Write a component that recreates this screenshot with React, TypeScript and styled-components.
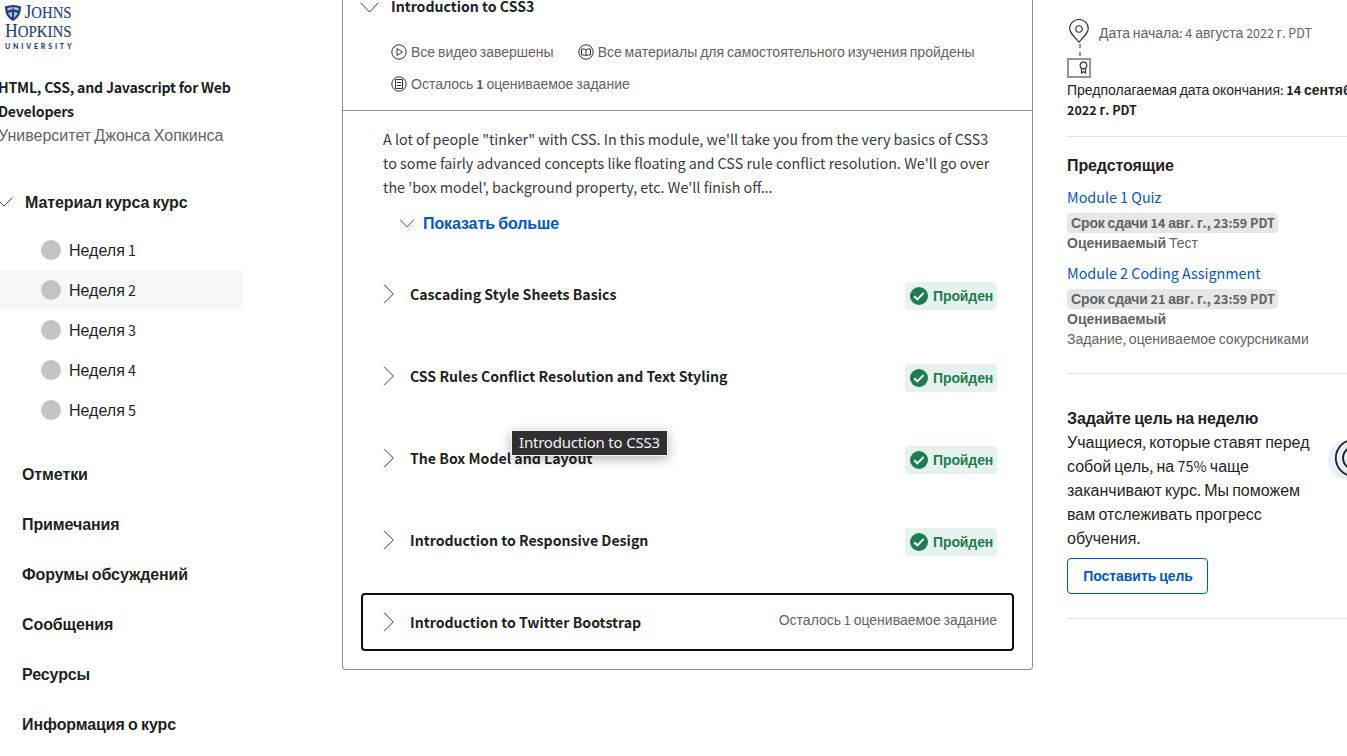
import React from "react";
import styled, { createGlobalStyle } from "styled-components";

const GlobalStyle = createGlobalStyle`
  *, *::before, *::after { box-sizing: border-box; }
  body { margin: 0; background: #fff; overflow: hidden; }
  h1, h2, h3, p, ul { margin: 0; padding: 0; font-size: inherit; font-weight: inherit; }
  ul { list-style: none; }
`;

const cyrillic = `"Liberation Sans", Arial, sans-serif`;
const latin = `"Noto Sans CJK SC", "Noto Sans", sans-serif`;

const LatinRun = styled.span`
  font-family: ${latin};
  font-size: 0.896em;
  line-height: 0;
  letter-spacing: 0;
`;

/* Latin letters, digits and spaces use a humanist face, Cyrillic the default one. */
const T = ({ children }: { children: string }) => (
  <>
    {children.split(/([\u0400-\u04FF]+)/).map((part, i) =>
      part === "" ? null : i % 2 ? part : <LatinRun key={i}>{part}</LatinRun>
    )}
  </>
);

const Page = styled.div`
  display: grid;
  grid-template-columns: 342px 691px 1fr;
  width: 100%;
  height: 756px;
  overflow: hidden;
  font-family: ${cyrillic};
  font-size: 16px;
  line-height: 24px;
  color: #1f1f1f;
`;

const Sidebar = styled.nav`
  display: flex;
  flex-direction: column;
  min-width: 0;
`;

const Logo = styled.svg`
  display: block;
  width: 80px;
  height: 52px;
`;

const CourseInfo = styled.div`
  margin: 24px 0 0 -2px;
  width: 245px;
`;

const CourseTitle = styled.h2`
  font-size: 15.8px;
  font-weight: 600;

  ${LatinRun} {
    letter-spacing: -0.23px;
  }
`;

const University = styled.p`
  color: #636363;
`;

const MaterialHeading = styled.h3`
  display: flex;
  align-items: center;
  gap: 12px;
  height: 24px;
  margin: 42px 0 16px -5px;
  font-weight: 700;
  letter-spacing: -0.1px;
`;

const SideLabel = styled.span`
  padding-top: 2px;
`;

const Week = styled.li<{ $active?: boolean }>`
  display: flex;
  align-items: center;
  gap: 8px;
  width: 243px;
  height: 40px;
  padding-left: 41px;
  border-radius: 0 4px 4px 0;
  background: ${(p) => (p.$active ? "#f5f7f8" : "transparent")};
`;

const Dot = styled.span`
  width: 20px;
  height: 20px;
  border-radius: 50%;
  background: #c1c3c5;
`;

const NavList = styled.ul`
  margin-top: 19px;
`;

const NavItem = styled.li`
  display: flex;
  align-items: center;
  height: 50px;
  padding-left: 22px;
  font-weight: 700;
  letter-spacing: -0.1px;
`;

const Module = styled.main`
  position: relative;
  height: 670px;
  border: 1px solid #8e8e96;
  border-top: 0;
  border-radius: 0 0 4px 4px;
`;

const ModuleHeader = styled.header`
  height: 111px;
  border-bottom: 1px solid #8e8e96;
`;

const ModuleTitle = styled.h1`
  display: flex;
  align-items: center;
  gap: 12px;
  height: 24px;
  margin: 0 0 0 17px;
  padding-bottom: 10px;
  font-size: 15.77px;
  font-weight: 700;
`;

const MetaList = styled.ul`
  display: flex;
  flex-wrap: wrap;
  gap: 8px 24px;
  padding: 16px 0 0 48px;
`;

const MetaItem = styled.li`
  display: flex;
  align-items: center;
  gap: 4px;
  font-size: 14px;
  color: #636363;
  white-space: pre;
`;

const Description = styled.p`
  padding: 17px 0 0 40px;
  color: #373a3c;
  white-space: pre;
`;

const ShowMore = styled.div`
  display: flex;
  align-items: center;
  gap: 8px;
  height: 24px;
  margin: 12px 0 29px 57px;
  font-weight: 700;
  letter-spacing: -0.1px;
  color: #0056d2;
`;

const Lessons = styled.div`
  display: flex;
  flex-direction: column;
  gap: 24px;
  padding: 0 18px;
`;

const Lesson = styled.section<{ $focused?: boolean }>`
  display: flex;
  align-items: center;
  height: 58px;
  padding: 0 15px 0 20px;
  border: 2px solid ${(p) => (p.$focused ? "#0f0f0f" : "transparent")};
  border-radius: 4px;
`;

const LessonName = styled.h3`
  flex: 1;
  margin: 1px 0 0 15px;
  font-weight: 700;
  font-size: 15.78px;
`;

const Passed = styled.span`
  display: flex;
  align-items: center;
  gap: 5px;
  width: 92px;
  height: 28px;
  margin-top: 3px;
  padding-left: 5px;
  border-radius: 4px;
  background: #e6f2ee;
  color: #1d7c50;
  font-size: 14px;
  font-weight: 700;
  letter-spacing: -0.1px;
`;

const Remaining = styled.span`
  margin-top: -4px;
  font-size: 14px;
  color: #636363;
`;

const Tooltip = styled.div`
  position: absolute;
  left: 168px;
  top: 430px;
  width: 157px;
  height: 26px;
  padding-left: 7px;
  border: 1px solid #f4f4f4;
  background: #2f2f2f;
  box-shadow: 0 3px 12px rgba(0, 0, 0, 0.3);
  color: #f2f2f2;
  font-family: "Noto Sans", sans-serif;
  font-size: 15px;
  letter-spacing: -0.2px;
  line-height: 23px;
  white-space: nowrap;
`;

const Aside = styled.aside`
  min-width: 0;
  padding-left: 34px;
  white-space: nowrap;
`;

const DateBlock = styled.div`
  display: grid;
  grid-template-columns: 24px 1fr;
  column-gap: 8px;
  height: 80px;
  padding-top: 19px;
`;

const StartDate = styled.p`
  margin-top: 2px;
  color: #636363;
  font-size: 14px;
`;

const EndDate = styled.p`
  font-size: 14px;
  line-height: 20px;
`;

const Rule = styled.hr<{ $top: number }>`
  height: 1px;
  margin: ${(p) => p.$top}px 0 0;
  border: 0;
  background: #e1e1e1;
`;

const AsideHeading = styled.h2`
  margin-top: 17px;
  font-weight: 700;
  letter-spacing: -0.1px;
`;

const Assignment = styled.div`
  margin: 8px 0 0;
  height: 68px;
  color: #636363;
  font-size: 14px;
  line-height: 20px;
`;

const AssignmentLink = styled.div`
  height: 27px;
  font-size: 16px;
  line-height: 24px;
  color: #0056d2;
`;

const Deadline = styled.div`
  width: 211px;
  height: 20px;
  padding-left: 4px;
  border-radius: 4px;
  background: #e5e7e8;
  font-weight: 700;
  letter-spacing: -0.14px;
`;

const Goal = styled.section`
  display: flex;
  margin-top: 33px;
`;

const GoalText = styled.div`
  width: 261px;
  flex: none;
`;

const GoalTitle = styled.h2`
  font-weight: 700;
  letter-spacing: -0.1px;
`;

const GoalButton = styled.button`
  display: block;
  width: 141px;
  height: 36px;
  margin: 7px 0 0;
  padding: 0 0 0 1px;
  border: 1px solid #0056d2;
  border-radius: 4px;
  background: #fff;
  color: #0056d2;
  font: 700 14px/20px ${cyrillic};
  letter-spacing: -0.05px;
`;

const GoalArt = styled.svg`
  display: block;
  flex: none;
  margin-top: 31px;
`;

const Chevron = ({ w, h, d, color = "#333" }: { w: number; h: number; d: string; color?: string }) => (
  <svg width={w} height={h} viewBox={`0 0 ${w} ${h}`} fill="none" stroke={color} strokeWidth="0.95">
    <path d={d} />
  </svg>
);

const MetaIcon = ({ children }: { children: React.ReactNode }) => (
  <svg width="16" height="16" viewBox="0 0 16 16" fill="none" stroke="#333" strokeWidth="1">
    <circle cx="8" cy="8" r="7.2" />
    {children}
  </svg>
);

const lessons = [
  "Cascading Style Sheets Basics",
  "CSS Rules Conflict Resolution and Text Styling",
  "The Box Model and Layout",
  "Introduction to Responsive Design",
];

const sections = ["Отметки", "Примечания", "Форумы обсуждений", "Сообщения", "Ресурсы", "Информация о курс"];

const chevronRight = "M1 .7 10.3 10 1 19.3";

export default function App() {
  return (
    <Page>
      <GlobalStyle />
      <Sidebar>
        <Logo viewBox="0 0 80 52" fill="#24417f" fontFamily="Liberation Serif, serif">
          <path d="M5 6.3c3-.2 5-1.3 8-1.3s5 1.1 8 1.3c0 7-2 11.500-8 14.700-6-3.200-8-7.700-8-14.700Z" />
          <path d="M7.500 8 12.500 7v2.300L7.500 10.500ZM13.500 7l5 1v2.500l-5-1.200ZM8 13l4-1v5.500l-1.500-1ZM14 12l4 1-2.500 3.500L14 18Z" fill="#b8c4dc" />
          <g stroke="#24417f" strokeWidth=".15">
            <text x="24.5" y="18" fontSize="19" textLength="47" lengthAdjust="spacingAndGlyphs">
              J<tspan fontSize="16">OHNS</tspan>
            </text>
            <text x="5" y="37" fontSize="19" textLength="66.5" lengthAdjust="spacingAndGlyphs">
              H<tspan fontSize="16">OPKINS</tspan>
            </text>
          </g>
          <text x="5" y="48.5" fontSize="7" fontWeight="900" fontFamily="Lato, sans-serif" textLength="66.5">
            UNIVERSITY
          </text>
        </Logo>
        <CourseInfo>
          <CourseTitle><T>HTML, CSS, and Javascript for Web Developers</T></CourseTitle>
          <University><T>Университет Джонса Хопкинса</T></University>
        </CourseInfo>
        <MaterialHeading>
          <Chevron w={18} h={10} d="M.7.7 9 9.2l8.3-8.5" />
          <SideLabel><T>Материал курса курс</T></SideLabel>
        </MaterialHeading>
        <ul>
          {[1, 2, 3, 4, 5].map((n) => (
            <Week key={n} $active={n === 2}>
              <Dot />
              <SideLabel><T>{`Неделя ${n}`}</T></SideLabel>
            </Week>
          ))}
        </ul>
        <NavList>
          {sections.map((s) => (
            <NavItem key={s}><SideLabel><T>{s}</T></SideLabel></NavItem>
          ))}
        </NavList>
      </Sidebar>

      <Module>
        <ModuleHeader>
          <ModuleTitle>
            <Chevron w={19} h={11} d="M.5.7 9.5 10l9-9.3" />
            <span><T>Introduction to CSS3</T></span>
          </ModuleTitle>
          <MetaList>
            <MetaItem>
              <MetaIcon><path d="M6 4.5 11.5 8 6 11.5Z" /></MetaIcon>
              <span><T>Все видео завершены</T></span>
            </MetaItem>
            <MetaItem>
              <MetaIcon><path d="M3.5 5h3.2L8 6l1.3-1h3.2v6H9.3L8 11.8 6.7 11H3.5ZM8 6v5.5" /></MetaIcon>
              <span><T>Все материалы для самостоятельного изучения пройдены</T></span>
            </MetaItem>
            <MetaItem>
              <MetaIcon><path d="M4.5 3.5h7v9h-7ZM6 6.5h4M6 9.5h4" /></MetaIcon>
              <span><T>Осталось </T><b><T>1</T></b><T> оцениваемое задание</T></span>
            </MetaItem>
          </MetaList>
        </ModuleHeader>
        <Description>
          <T>{`A lot of people "tinker" with CSS. In this module, we'll take you from the very basics of CSS3
to some fairly advanced concepts like floating and CSS rule conflict resolution. We'll go over
the 'box model', background property, etc. We'll finish off...`}</T>
        </Description>
        <ShowMore>
          <Chevron w={15} h={10} d="M0 .5l7 7.3 7-7.3" color="#0056d2" />
          <span><T>Показать больше</T></span>
        </ShowMore>
        <Lessons>
          {lessons.map((name) => (
            <Lesson key={name}>
              <Chevron w={12} h={20} d={chevronRight} />
              <LessonName><T>{name}</T></LessonName>
              <Passed>
                <svg width="18" height="18" viewBox="0 0 18 18">
                  <circle cx="9" cy="9" r="9" fill="#1d7c50" />
                  <path d="m4.2 9.2 3.2 3.2 6.3-6.5" fill="none" stroke="#fff" strokeWidth="2" />
                </svg>
                <span>Пройден</span>
              </Passed>
            </Lesson>
          ))}
          <Lesson $focused>
            <Chevron w={12} h={20} d={chevronRight} />
            <LessonName><T>Introduction to Twitter Bootstrap</T></LessonName>
            <Remaining><T>Осталось 1 оцениваемое задание</T></Remaining>
          </Lesson>
        </Lessons>
        <Tooltip>Introduction to CSS3</Tooltip>
      </Module>

      <Aside>
        <DateBlock>
          <svg width="24" height="60" viewBox="0 0 24 60" fill="none">
            <path d="M12 23C6 16.5 2.7 13.5 2.7 9.5a9.3 9 0 0 1 18.6 0C21.3 13.5 18 16.5 12 23Z" stroke="#333" strokeWidth="1.2" />
            <circle cx="12" cy="10" r="3.2" stroke="#333" strokeWidth="1.1" />
            <path d="M13 25v13" stroke="#919191" strokeWidth="2" strokeDasharray="4 4" />
            <path d="M1 40h22v18H1Z" stroke="#969696" strokeWidth="2" />
            <circle cx="16.5" cy="46.5" r="3.3" stroke="#333" strokeWidth="1.2" />
            <path d="M14.5 49.5v4.5l2-1.3 2 1.3v-4.5" stroke="#333" strokeWidth="1.2" />
          </svg>
          <StartDate><T>Дата начала: 4 августа 2022 г. PDT</T></StartDate>
        </DateBlock>
        <EndDate>
          <T>Предполагаемая дата окончания: </T><b><T>14 сентября</T></b>
          <br />
          <b><T>2022 г. PDT</T></b>
        </EndDate>
        <Rule $top={16} />
        <AsideHeading><T>Предстоящие</T></AsideHeading>
        <Assignment>
          <AssignmentLink><T>Module 1 Quiz</T></AssignmentLink>
          <Deadline><T>Срок сдачи 14 авг. г., 23:59 PDT</T></Deadline>
          <b>Оцениваемый</b><T> Тест</T>
        </Assignment>
        <Assignment>
          <AssignmentLink><T>Module 2 Coding Assignment</T></AssignmentLink>
          <Deadline><T>Срок сдачи 21 авг. г., 23:59 PDT</T></Deadline>
          <b>Оцениваемый</b>
          <br />
          <T>Задание, оцениваемое сокурсниками</T>
        </Assignment>
        <Rule $top={43} />
        <Goal>
          <GoalText>
            <GoalTitle><T>Задайте цель на неделю</T></GoalTitle>
            <p>
              <T>Учащиеся, которые ставят перед</T><br />
              <T>собой цель, на 75% чаще</T><br />
              <T>заканчивают курс. Мы поможем</T><br />
              <T>вам отслеживать прогресс</T><br />
              <T>обучения.</T>
            </p>
            <GoalButton><T>Поставить цель</T></GoalButton>
          </GoalText>
          <GoalArt width="44" height="44" viewBox="0 0 44 44" fill="none">
            <circle cx="20" cy="22" r="20" fill="#e8f0fc" />
            <circle cx="26" cy="20" r="18.2" stroke="#1f1f1f" strokeWidth="1.8" />
            <circle cx="26" cy="20" r="11" stroke="#1f1f1f" strokeWidth="1.8" />
          </GoalArt>
        </Goal>
        <Rule $top={24} />
      </Aside>
    </Page>
  );
}
